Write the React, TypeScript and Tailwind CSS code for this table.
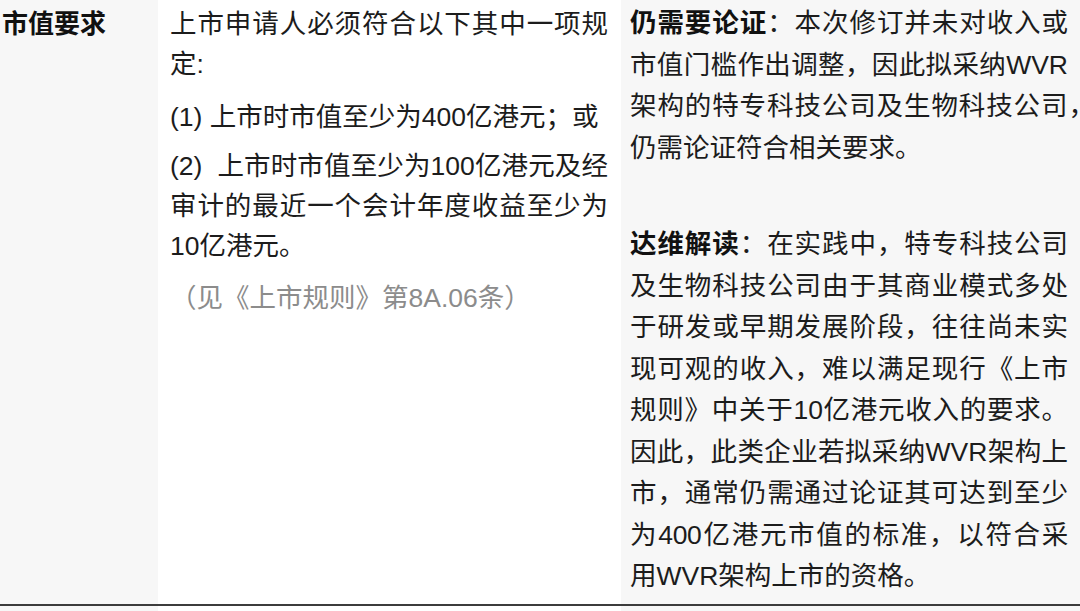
import clsx from "clsx"
import type { ReactNode } from "react"

// one visual line of the table text, justified to the column edge when it is a full line
const Line = ({ children, full, className }: { children: ReactNode; full?: boolean; className?: string }) => (
  <span className={clsx("block whitespace-nowrap", full && "text-justify [text-align-last:justify]", className)}>
    {children}
  </span>
)

export default function App() {
  return (
    <div className="w-[1080px] h-[611px] overflow-hidden bg-white font-['Liberation_Sans','Noto_Sans_CJK_SC',sans-serif] text-[#1c1c1c]">
      <div className="grid grid-cols-[158px_463px_459px] h-full">
        {/* label column */}
        <div className="bg-[#f7f7f7] h-full">
          <div className="h-[606px] border-b-2 border-[#3c3c3c] pt-[4px] pl-[2px]">
            <p className="text-[26px] leading-[40px] font-bold text-[#111]">市值要求</p>
          </div>
        </div>

        {/* rule column */}
        <div className="bg-white h-full">
          <div className="h-[606px] border-b-2 border-[#3c3c3c] pt-[4px] pl-[12px] text-[26.5px] leading-[40px]">
            <div className="w-[438px]">
              <p>
                <Line full>上市申请人必须符合以下其中一项规</Line>
                <Line>定:</Line>
              </p>
              <p className="mt-[13px]">
                <Line>(1) 上市时市值至少为400亿港元；或</Line>
              </p>
              <p className="mt-[9px]">
                <Line full>(2)&nbsp; 上市时市值至少为100亿港元及经</Line>
                <Line full>审计的最近一个会计年度收益至少为</Line>
                <Line>10亿港元。</Line>
              </p>
              <p className="mt-[12px] text-[#8c8c8c]">
                <Line>（见《上市规则》第8A.06条）</Line>
              </p>
            </div>
          </div>
        </div>

        {/* commentary column */}
        <div className="bg-[#f7f7f7] h-full">
          <div className="h-[606px] border-b-2 border-[#3c3c3c] pt-[3px] pl-[9px] text-[26.5px] leading-[41.5px]">
            <div className="w-[438px]">
              <p>
                <Line full>
                  <b className="font-bold text-[#111]">仍需要论证</b>：本次修订并未对收入或
                </Line>
                <Line full>市值门槛作出调整，因此拟采纳WVR</Line>
                <Line className="tracking-[0.9px]">
                  架构的特专科技公司及生物科技公司<span className="tracking-[-15px]">，</span>
                </Line>
                <Line>仍需论证符合相关要求。</Line>
              </p>
              <p className="mt-[55px]">
                <Line full>
                  <b className="font-bold text-[#111]">达维解读</b>：在实践中，特专科技公司
                </Line>
                <Line full>及生物科技公司由于其商业模式多处</Line>
                <Line full>于研发或早期发展阶段，往往尚未实</Line>
                <Line full>现可观的收入，难以满足现行《上市</Line>
                <Line full>规则》中关于10亿港元收入的要求。</Line>
                <Line full>因此，此类企业若拟采纳WVR架构上</Line>
                <Line full>市，通常仍需通过论证其可达到至少</Line>
                <Line full className="tracking-[-0.3px]">为400亿港元市值的标准，以符合采</Line>
                <Line>用WVR架构上市的资格。</Line>
              </p>
            </div>
          </div>
        </div>
      </div>
    </div>
  )
}
